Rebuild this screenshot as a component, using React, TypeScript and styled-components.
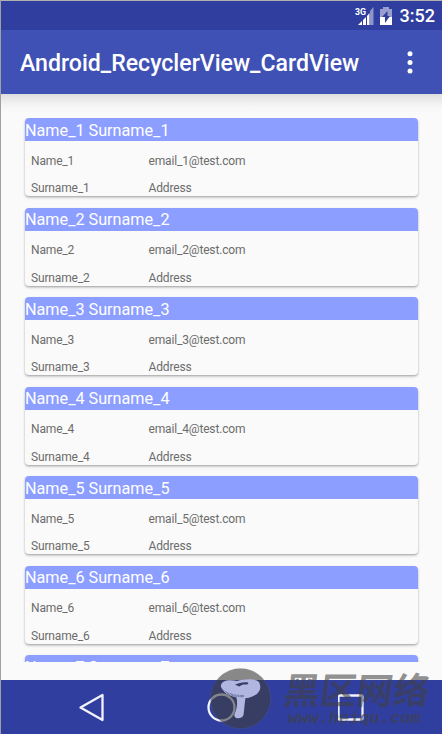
import React from 'react';
import styled, { createGlobalStyle } from 'styled-components';

const GlobalStyle = createGlobalStyle`
  * { box-sizing: border-box; }
  body { margin: 0; background: #fafafa; font-family: Roboto, sans-serif; overflow: hidden; }
`;

const Screen = styled.div`
  position: relative;
  display: flex;
  flex-direction: column;
  width: 442px;
  height: 734px;
  overflow: hidden;
  background: #fafafa;
  border-top: 1px solid #b0b0b0;
  border-left: 1px solid #a0a0a0;
`;

const StatusBar = styled.div`
  display: flex;
  flex: 0 0 29px;
  align-items: center;
  justify-content: flex-end;
  padding-right: 7px;
  background: #303f9f;
  color: #fff;
`;

const Clock = styled.span`
  margin-left: 6px;
  padding-top: 1px;
  font-size: 18px;
  font-weight: 500;
  line-height: 28px;
`;

const AppBar = styled.header`
  display: flex;
  flex: 0 0 64px;
  align-items: center;
  justify-content: space-between;
  padding: 2px 27px 0 19px;
  background: #3f51b5;
  color: #fff;
`;

const Title = styled.h1`
  margin: 0;
  padding-top: 1px;
  font-size: 23.1px;
  font-weight: 500;
  line-height: 28px;
  white-space: nowrap;
`;

const Content = styled.main`
  flex: 0 0 586px;
  padding: 24px 24px 18px;
  background: linear-gradient(#dedede 0, #ebebeb 6px, #f6f6f6 13px, #fafafa 19px);
`;

const List = styled.div`
  display: flex;
  flex-direction: column;
  gap: 11.5px;
  height: 544px;
  margin: 0 -4px;
  padding: 0 4px;
  overflow: hidden;
`;

const Card = styled.article`
  flex: 0 0 78px;
  overflow: hidden;
  border-radius: 4px;
  background: #fafafa;
  box-shadow: 0 1px 2px rgba(0, 0, 0, 0.24), 0 2px 3px rgba(0, 0, 0, 0.12);
`;

const CardHeader = styled.h2`
  height: 23px;
  margin: 0;
  padding-top: 0.8px;
  background: #8c9eff;
  color: #fff;
  font-size: 16.2px;
  font-weight: 400;
  line-height: 23px;
`;

const Fields = styled.div`
  display: grid;
  grid-template-columns: 117.5px 1fr;
  grid-template-rows: 27.5px 27px;
  padding: 5.8px 6px 0;
  color: #6c6c6c;
  font-size: 12px;
  letter-spacing: -0.16px;
  line-height: 28px;
`;

const NavBar = styled.nav`
  display: flex;
  flex: 0 0 54px;
  align-items: center;
  padding-left: 77px;
  gap: 101px;
  background: #303f9f;
`;

const Watermark = styled.div`
  position: absolute;
  left: 209px;
  top: 667px;
  display: flex;
  gap: 13px;
`;

const WatermarkText = styled.div`
  display: flex;
  flex-direction: column;
  color: rgba(64, 64, 64, 0.58);
`;

const SiteName = styled.span`
  height: 43px;
  font-family: 'Noto Sans CJK SC', sans-serif;
  font-size: 36.500px;
  font-weight: 700;
  line-height: 41px;
  white-space: nowrap;
  transform: skewX(-7deg);
`;

const SiteUrl = styled.span`
  padding-left: 4px;
  color: rgba(64, 64, 64, 0.65);
  font-family: 'Liberation Mono', monospace;
  font-size: 17px;
  font-weight: 700;
  font-style: italic;
  line-height: 16px;
`;

const contacts = [1, 2, 3, 4, 5, 6, 7];

function Signal() {
  return (
    <svg width="22" height="22" viewBox="0 0 22 22" fill="#fff">
      <text x="1" y="9.5" fontSize="9.5" fontWeight="700" textLength="11" lengthAdjust="spacingAndGlyphs">3G</text>
      <path d="M4 20l4-4v4zM9 15l3-3v8H9zM13 11l2.500-3v12H13z" />
      <path d="M16 6l3.500-4v18H16z" opacity=".45" />
    </svg>
  );
}

function Battery() {
  return (
    <svg width="18" height="22" viewBox="0 0 18 22">
      <path d="M4 4h3V2h6v2h3v16H4z" fill="#fff" opacity=".5" />
      <path d="M4 12h12v8H4z" fill="#fff" />
      <path d="M11.500 6v5H14l-5 7v-6H6z" fill="#303f9f" />
    </svg>
  );
}

function Mushroom() {
  return (
    <svg width="61" height="61" viewBox="0 0 61 61">
      <circle cx="30.5" cy="30.5" r="30" fill="#3c3c3c" fillOpacity=".6" stroke="#777" strokeOpacity=".5" strokeWidth=".7" strokeDasharray="1 1" />
      <path d="M26 27c2 8 1 14-1.500 19-1.500 5 7 6 9 1 1-6 1-13 2.500-20z" fill="#b0b6df" />
      <path d="M11 19C10 13 18 11 27 13c7-2 17-3 22 1 4 8-2 14-11 16-13 1-23-3-27-11z" fill="#b0b6df" />
      <path d="M12 21c6 4 13 6 22 6v2c-9 1-17-2-22-8z" fill="#7a80ad" />
      <path d="M14 23l3 3m0-3l4 4m0-3l4 4m0-3l3 4m1-4l1 4" fill="none" stroke="#b0b6df" strokeWidth=".7" />
      <path d="M25 16.500c4-1 8-3 13-2 1 2-1 2-5 2l-4 2z" fill="#373c63" />
    </svg>
  );
}

export default function App() {
  return (
    <>
      <GlobalStyle />
      <Screen>
        <StatusBar>
          <Signal />
          <Battery />
          <Clock>3:52</Clock>
        </StatusBar>
        <AppBar>
          <Title>Android_RecyclerView_CardView</Title>
          <svg width="10" height="26" viewBox="0 0 10 26" fill="#fff">
            <circle cx="5" cy="3.7" r="2.5" />
            <circle cx="5" cy="12.4" r="2.5" />
            <circle cx="5" cy="21.1" r="2.5" />
          </svg>
        </AppBar>
        <Content>
          <List>
            {contacts.map((n) => (
              <Card key={n}>
                <CardHeader>{`Name_${n} Surname_${n}`}</CardHeader>
                <Fields>
                  <span>{`Name_${n}`}</span>
                  <span>{`email_${n}@test.com`}</span>
                  <span>{`Surname_${n}`}</span>
                  <span>Address</span>
                </Fields>
              </Card>
            ))}
          </List>
        </Content>
        <NavBar>
          <svg width="28" height="32" viewBox="0 0 28 32" fill="none" stroke="#f1f2fa" strokeWidth="2.3" strokeLinejoin="round">
            <path d="M2.5 16.5L24.5 4v25z" />
          </svg>
          <svg width="30" height="32" viewBox="0 0 30 32" fill="none" stroke="#f1f2fa" strokeWidth="2.3">
            <circle cx="14.5" cy="16.5" r="13" />
          </svg>
          <svg width="28" height="32" viewBox="0 0 28 32" fill="none" stroke="#f1f2fa" strokeWidth="2.3" strokeLinejoin="round">
            <rect x="0.5" y="4.5" width="24" height="24" rx="1" />
          </svg>
        </NavBar>
        <Watermark>
          <Mushroom />
          <WatermarkText>
            <SiteName>黑区网络</SiteName>
            <SiteUrl>www.heiqu.com</SiteUrl>
          </WatermarkText>
        </Watermark>
      </Screen>
    </>
  );
}
